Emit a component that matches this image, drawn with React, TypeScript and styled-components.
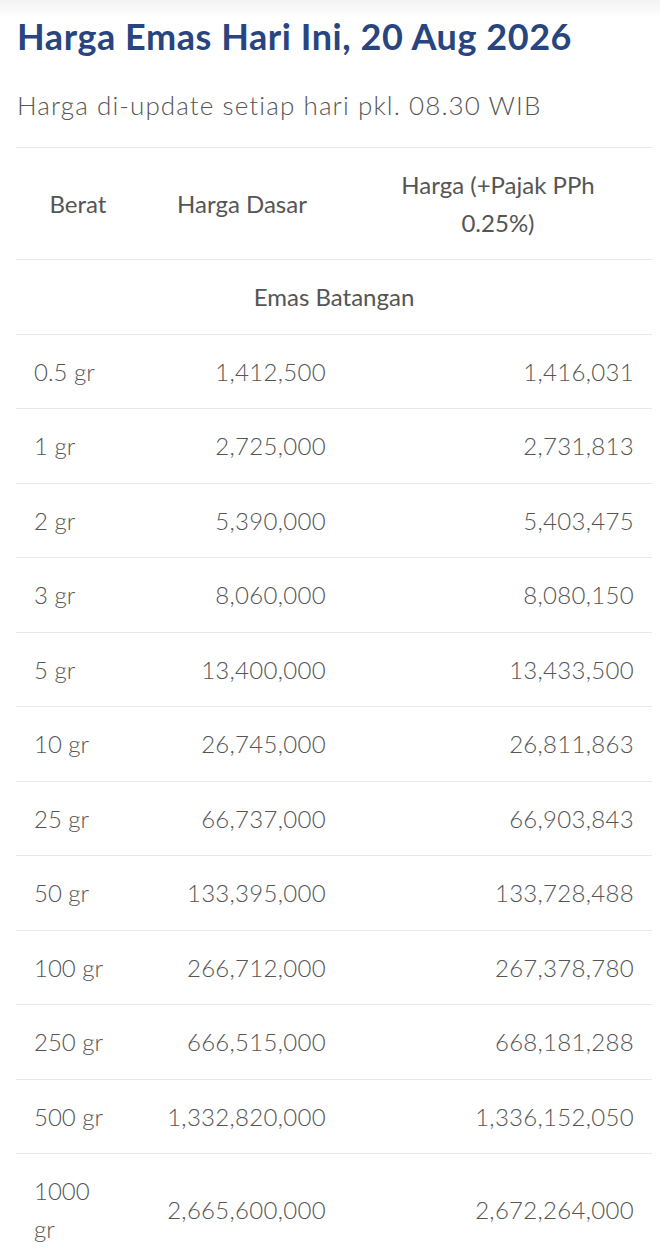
import styled, { createGlobalStyle } from "styled-components";

const GlobalStyle = createGlobalStyle`
  html, body {
    margin: 0;
    padding: 0;
    background: #ffffff;
  }
  body {
    font-family: Lato, "Open Sans", "Liberation Sans", sans-serif;
    color: #555555;
  }
`;

const StPage = styled.main`
  padding: 14px 8px 0 16px;
  background: linear-gradient(to bottom, #f2f2f2 0, #ffffff 18px);
`;

const StTitle = styled.h1`
  margin: 0 0 0 1px;
  font-size: 36px;
  line-height: 44px;
  font-weight: 700;
  color: #28457f;
  letter-spacing: 0.55px;
`;

const StSubtitle = styled.p`
  margin: 32px 0 0 1px;
  font-size: 26px;
  line-height: 30px;
  font-weight: 300;
  letter-spacing: 1.1px;
  color: #555555;
`;

const StTable = styled.table`
  width: 100%;
  margin-top: 27px;
  border-collapse: collapse;
  table-layout: fixed;
  font-size: 24px;
  line-height: 37.5px;
  color: #555555;
`;

const StHeadCell = styled.th`
  padding: 18px 24px;
  font-weight: 400;
  text-align: center;
  border-top: 1px solid #e8e8e8;
  border-bottom: 1px solid #e8e8e8;
`;

const StGroupCell = styled.td`
  padding: 18px;
  text-align: center;
  font-weight: 400;
  border-bottom: 1px solid #e8e8e8;
`;

interface IStCell {
  weight?: boolean;
}

const StCell = styled.td<IStCell>`
  padding: ${(props) => (props.weight ? "18px 30px 18px 18px" : "18px")};
  text-align: ${(props) => (props.weight ? "left" : "right")};
  font-weight: 300;
  letter-spacing: ${(props) => (props.weight ? "0" : "0.3px")};
  border-bottom: 1px solid #e8e8e8;
  vertical-align: middle;
`;

const rows: [string, string, string][] = [
  ["0.5 gr", "1,412,500", "1,416,031"],
  ["1 gr", "2,725,000", "2,731,813"],
  ["2 gr", "5,390,000", "5,403,475"],
  ["3 gr", "8,060,000", "8,080,150"],
  ["5 gr", "13,400,000", "13,433,500"],
  ["10 gr", "26,745,000", "26,811,863"],
  ["25 gr", "66,737,000", "66,903,843"],
  ["50 gr", "133,395,000", "133,728,488"],
  ["100 gr", "266,712,000", "267,378,780"],
  ["250 gr", "666,515,000", "668,181,288"],
  ["500 gr", "1,332,820,000", "1,336,152,050"],
  ["1000 gr", "2,665,600,000", "2,672,264,000"],
];

export default function App() {
  return (
    <>
      <GlobalStyle />
      <StPage>
        <StTitle>Harga Emas Hari Ini, 20 Aug 2026</StTitle>
        <StSubtitle>Harga di-update setiap hari pkl. 08.30 WIB</StSubtitle>
        <StTable>
          <colgroup>
            <col style={{ width: 124 }} />
            <col style={{ width: 204 }} />
            <col />
          </colgroup>
          <thead>
            <tr>
              <StHeadCell>Berat</StHeadCell>
              <StHeadCell>Harga Dasar</StHeadCell>
              <StHeadCell>Harga (+Pajak PPh 0.25%)</StHeadCell>
            </tr>
          </thead>
          <tbody>
            <tr>
              <StGroupCell colSpan={3}>Emas Batangan</StGroupCell>
            </tr>
            {rows.map(([weight, base, taxed]) => (
              <tr key={weight}>
                <StCell weight>{weight}</StCell>
                <StCell>{base}</StCell>
                <StCell>{taxed}</StCell>
              </tr>
            ))}
          </tbody>
        </StTable>
      </StPage>
    </>
  );
}
